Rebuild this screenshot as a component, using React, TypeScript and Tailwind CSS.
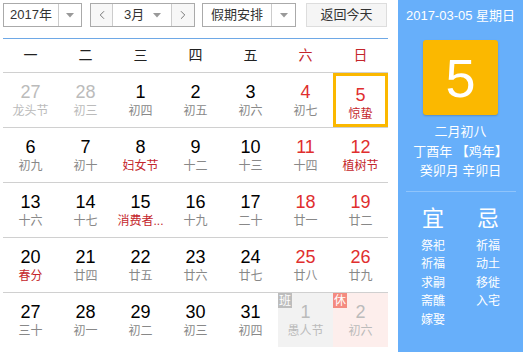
import { ChevronLeft, ChevronRight } from "lucide-react";

type Day = {
  n: number;
  sub: string;
  other?: boolean;
  weekend?: boolean;
  fest?: boolean;
  today?: boolean;
  tag?: "班" | "休";
};

const weeks: Day[][] = [
  [
    { n: 27, sub: "龙头节", other: true },
    { n: 28, sub: "初三", other: true },
    { n: 1, sub: "初四" },
    { n: 2, sub: "初五" },
    { n: 3, sub: "初六" },
    { n: 4, sub: "初七", weekend: true },
    { n: 5, sub: "惊蛰", weekend: true, fest: true, today: true },
  ],
  [
    { n: 6, sub: "初九" },
    { n: 7, sub: "初十" },
    { n: 8, sub: "妇女节", fest: true },
    { n: 9, sub: "十二" },
    { n: 10, sub: "十三" },
    { n: 11, sub: "十四", weekend: true },
    { n: 12, sub: "植树节", weekend: true, fest: true },
  ],
  [
    { n: 13, sub: "十六" },
    { n: 14, sub: "十七" },
    { n: 15, sub: "消费者...", fest: true },
    { n: 16, sub: "十九" },
    { n: 17, sub: "二十" },
    { n: 18, sub: "廿一", weekend: true },
    { n: 19, sub: "廿二", weekend: true },
  ],
  [
    { n: 20, sub: "春分", fest: true },
    { n: 21, sub: "廿四" },
    { n: 22, sub: "廿五" },
    { n: 23, sub: "廿六" },
    { n: 24, sub: "廿七" },
    { n: 25, sub: "廿八", weekend: true },
    { n: 26, sub: "廿九", weekend: true },
  ],
  [
    { n: 27, sub: "三十" },
    { n: 28, sub: "初一" },
    { n: 29, sub: "初二" },
    { n: 30, sub: "初三" },
    { n: 31, sub: "初四" },
    { n: 1, sub: "愚人节", other: true, tag: "班" },
    { n: 2, sub: "初六", other: true, tag: "休" },
  ],
];

const weekdays = ["一", "二", "三", "四", "五", "六", "日"];
const yi = ["祭祀", "祈福", "求嗣", "斋醮", "嫁娶"];
const ji = ["祈福", "动土", "移徙", "入宅"];

function Caret() {
  return (
    <svg width="8" height="5" viewBox="0 0 8 5" className="text-[#999]">
      <path d="M0 0h8L4 4.5z" fill="currentColor" />
    </svg>
  );
}

function DayCell({ d }: { d: Day }) {
  let numColor = "text-[#000]";
  if (d.other) numColor = "text-[#bbb]";
  else if (d.weekend) numColor = "text-[#e02e2e]";
  let subColor = "text-[#888]";
  if (d.other) subColor = "text-[#bbb]";
  else if (d.fest) subColor = "text-[#c4262b]";

  let bg = "";
  if (d.tag === "班") bg = "bg-[#f2f2f2]";
  if (d.tag === "休") bg = "bg-[#fdeeec]";

  return (
    <div
      className={`relative flex h-[54px] flex-col items-center pt-[8px] ${bg} ${
        d.today ? "border-[3px] border-[#fbb800] pt-[5px]" : ""
      }`}
    >
      {d.tag && (
        <span
          className={`absolute left-0 top-0 flex h-[15px] w-[14px] items-center justify-center text-[12px] leading-none text-white ${
            d.tag === "班" ? "bg-[#bdbdbd]" : "bg-[#f48b80]"
          }`}
        >
          {d.tag}
        </span>
      )}
      <span className={`text-[18px] leading-[22px] ${numColor}`}>{d.n}</span>
      <span className={`whitespace-nowrap text-[12px] leading-[16px] ${subColor}`}>{d.sub}</span>
    </div>
  );
}

export default function App() {
  return (
    <div
      className="flex h-[352px] w-[523px] overflow-hidden bg-white text-[#333]"
      style={{ fontFamily: '"Liberation Sans", "Noto Sans CJK SC", sans-serif' }}
    >
      <div className="w-[398px] shrink-0 pl-[3px]">
        <div className="flex h-[38px] items-start pt-[3px] text-[13px]">
          <div className="flex h-[24px] w-[79px] border border-[#aaa]">
            <div className="flex flex-1 items-center justify-center">2017年</div>
            <div className="flex w-[23px] items-center justify-center border-l border-[#ccc]">
              <Caret />
            </div>
          </div>
          <div className="ml-[8px] flex h-[24px] w-[105px] border border-[#aaa]">
            <div className="flex w-[21px] items-center justify-center bg-[#f7f7f7] text-[#666]">
              <ChevronLeft size={14} strokeWidth={1.5} />
            </div>
            <div className="flex flex-1 items-center justify-between border-x border-[#ccc] pl-[11px] pr-[10px]">
              <span>3月</span>
              <Caret />
            </div>
            <div className="flex w-[22px] items-center justify-center bg-[#f7f7f7] text-[#666]">
              <ChevronRight size={14} strokeWidth={1.5} />
            </div>
          </div>
          <div className="ml-[7px] flex h-[24px] w-[94px] border border-[#aaa]">
            <div className="flex flex-1 items-center justify-center">假期安排</div>
            <div className="flex w-[24px] items-center justify-center border-l border-[#ccc]">
              <Caret />
            </div>
          </div>
          <div className="ml-[10px] flex h-[24px] w-[81px] items-center justify-center border border-[#ddd] bg-[#f5f5f5]">
            返回今天
          </div>
        </div>
        <div className="w-[385px] border-t border-[#6ea8e6]">
          <div className="grid h-[34px] grid-cols-7 items-center border-b border-[#d0d0d0] text-[14px]">
            {weekdays.map((w, i) => (
              <div key={w} className={`text-center ${i >= 5 ? "text-[#c4262b]" : "text-[#222]"}`}>
                {w}
              </div>
            ))}
          </div>
          {weeks.map((row, ri) => (
            <div key={ri} className={`grid grid-cols-7 ${ri > 0 ? "border-t border-[#d0d0d0]" : ""}`}>
              {row.map((d, i) => (
                <DayCell key={i} d={d} />
              ))}
            </div>
          ))}
        </div>
      </div>
      <div className="flex flex-1 flex-col items-center bg-[#67affa] text-white">
        <div className="mt-[7px] text-[13px] leading-[18px]">2017-03-05 星期日</div>
        <div className="mt-[15px] flex h-[75px] w-[75px] items-center justify-center rounded-[3px] bg-[#fbb800] text-[54px] leading-none shadow-[0_1px_2px_rgba(0,0,0,0.2)]">
          5
        </div>
        <div className="mt-[7px] text-center text-[13px] leading-[19.5px]">
          <div>二月初八</div>
          <div>丁酉年 【鸡年】</div>
          <div>癸卯月 辛卯日</div>
        </div>
        <div className="mt-[10px] h-[1px] w-[110px] bg-[#8fc4fb]" />
        <div className="mt-[14px] grid w-[110px] grid-cols-2 text-center">
          <div className="text-[22px] leading-[26px]">宜</div>
          <div className="text-[22px] leading-[26px]">忌</div>
          <div className="mt-[5px] text-[12px] leading-[18.5px]">
            {yi.map((t) => (
              <div key={t}>{t}</div>
            ))}
          </div>
          <div className="mt-[5px] text-[12px] leading-[18.5px]">
            {ji.map((t) => (
              <div key={t}>{t}</div>
            ))}
          </div>
        </div>
      </div>
    </div>
  );
}
